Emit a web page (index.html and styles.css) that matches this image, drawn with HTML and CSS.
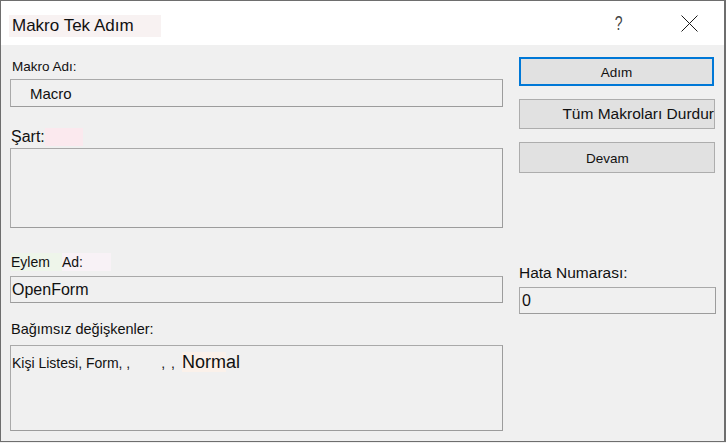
FILE: index.html
```html
<!DOCTYPE html>
<html lang="tr">
<head>
<meta charset="utf-8">
<title>Makro Tek Adım</title>
<link rel="stylesheet" href="styles.css">
</head>
<body>
<div class="dialog">
  <div class="titlebar">
    <span class="title"><span class="title-text">Makro Tek Adım</span></span>
    <span class="help">?</span>
    <span class="close">
      <svg width="17" height="17" viewBox="0 0 17 17"><path d="M0.5 0.5 L16.5 16.5 M16.5 0.5 L0.5 16.5" stroke="#1a1a1a" stroke-width="1" fill="none"/></svg>
    </span>
  </div>
  <div class="content">
    <div class="left">
      <div class="label l-makro">Makro Adı:</div>
      <div class="box box-makro"><span class="macro-text">Macro</span></div>
      <div class="label l-sart"><span>Şart:</span><span class="hl-pink"></span></div>
      <div class="box box-sart"></div>
      <div class="label l-eylem"><span class="hl-green">Eylem</span><span class="hl-pink2">Ad:</span></div>
      <div class="box box-eylem"><span class="eylem-text">OpenForm</span></div>
      <div class="label l-bag">Bağımsız değişkenler:</div>
      <div class="box box-args"><span class="args-small">Kişi Listesi, Form, ,</span><span class="args-commas">, ,</span><span class="args-big"><span class="hl-peach">Norm</span>al</span></div>
    </div>
    <div class="right">
      <div class="btn btn-adim">Adım</div>
      <div class="btn btn-tum">Tüm Makroları Durdur</div>
      <div class="btn btn-devam">Devam</div>
      <div class="label l-hata">Hata Numarası:</div>
      <div class="box box-hata">0</div>
    </div>
  </div>
</div>
</body>
</html>
```

FILE: styles.css
```css
html, body {
  margin: 0;
  padding: 0;
  background: #f0f0f0;
}
body {
  font-family: "Liberation Sans", Arial, sans-serif;
  color: #000;
}
.dialog {
  box-sizing: border-box;
  width: 726px;
  height: 442px;
  border: 1px solid #6e6e6e;
  border-right-width: 2px;
  background: #f0f0f0;
  display: flex;
  flex-direction: column;
  overflow: hidden;
}
.titlebar {
  height: 44px;
  background: #fff;
  display: flex;
  align-items: center;
  flex-shrink: 0;
}
.title {
  margin-left: 8px;
  margin-top: 5px;
  width: 152px;
  height: 22px;
  background: #f8f2f2;
  display: flex;
  align-items: center;
  overflow: hidden;
}
.title-text {
  margin-left: 3px;
  font-size: 17px;
  line-height: 17px;
  color: #111;
  white-space: nowrap;
}
.help {
  margin-left: auto;
  font-size: 20px;
  font-family: "Liberation Sans", sans-serif;
  color: #444;
  margin-right: 57px;
  transform: scaleX(0.7);
}
.close {
  display: flex;
  margin-right: 26px;
  margin-top: 1px;
}
.content {
  display: flex;
  padding-left: 9px;
}
.left {
  width: 493px;
  display: flex;
  flex-direction: column;
}
.right {
  margin-left: 16px;
  width: 197px;
  display: flex;
  flex-direction: column;
}
.label {
  height: 18px;
  line-height: 18px;
  display: flex;
  align-items: center;
  color: #111;
}
.l-makro { margin-top: 13px; font-size: 13.5px; padding-left: 2px; }
.l-sart { margin-top: 21px; font-size: 16px; padding-left: 1px; }
.l-eylem { margin-top: 25px; font-size: 14px; padding-left: 1px; }
.l-bag { margin-top: 17px; font-size: 14.5px; padding-left: 1px; }
.l-hata { margin-top: 91px; font-size: 15.5px; padding-left: 0; }
.hl-pink {
  width: 38px;
  height: 18px;
  background: #fbe9ee;
}
.hl-green {
  background: #eef5ea;
  padding-right: 12px;
}
.hl-pink2 {
  background: #f8f2f6;
  padding-right: 28px;
}
.hl-peach { background: #fbf1ea; }
.box {
  box-sizing: border-box;
  border: 1px solid #a9a9a9;
  border-right-color: #9c9c9c;
  border-bottom-color: #9c9c9c;
  background: #f0f0f0;
}
.box-makro {
  margin-top: 3px;
  height: 28px;
  display: flex;
  align-items: center;
  padding-left: 19px;
}
.macro-text { font-size: 15px; color: #111; }
.box-sart { margin-top: 2px; height: 80px; }
.box-eylem {
  margin-top: 5px;
  height: 27px;
  display: flex;
  align-items: center;
  padding-left: 1px;
}
.eylem-text { font-size: 16px; color: #111; }
.box-args {
  margin-top: 7px;
  height: 86px;
  padding: 6px 0 0 1px;
  display: flex;
  align-items: baseline;
}
.args-small { font-size: 14px; color: #111; }
.args-commas { font-size: 14px; margin-left: 31px; color: #111; letter-spacing: 1px; }
.args-big { font-size: 18px; margin-left: 6px; color: #111; }
.btn {
  box-sizing: border-box;
  background: #e1e1e1;
  border: 1px solid #adadad;
  display: flex;
  align-items: center;
  justify-content: center;
  font-size: 13.5px;
  color: #111;
  white-space: nowrap;
  overflow: hidden;
}
.btn-adim {
  margin-top: 12px;
  height: 29px;
  width: 195px;
  border: 2px solid #0078d7;
  padding-top: 2px;
}
.btn-tum {
  margin-top: 13px;
  height: 30px;
  width: 196px;
  justify-content: flex-end;
  font-size: 15.5px;
  padding-right: 0;
}
.btn-devam {
  margin-top: 13px;
  height: 31px;
  width: 196px;
  padding-right: 19px;
  padding-top: 2px;
}
.box-hata {
  margin-top: 5px;
  height: 27px;
  width: 197px;
  display: flex;
  align-items: center;
  padding-left: 2px;
  font-size: 16px;
  color: #111;
}
```
